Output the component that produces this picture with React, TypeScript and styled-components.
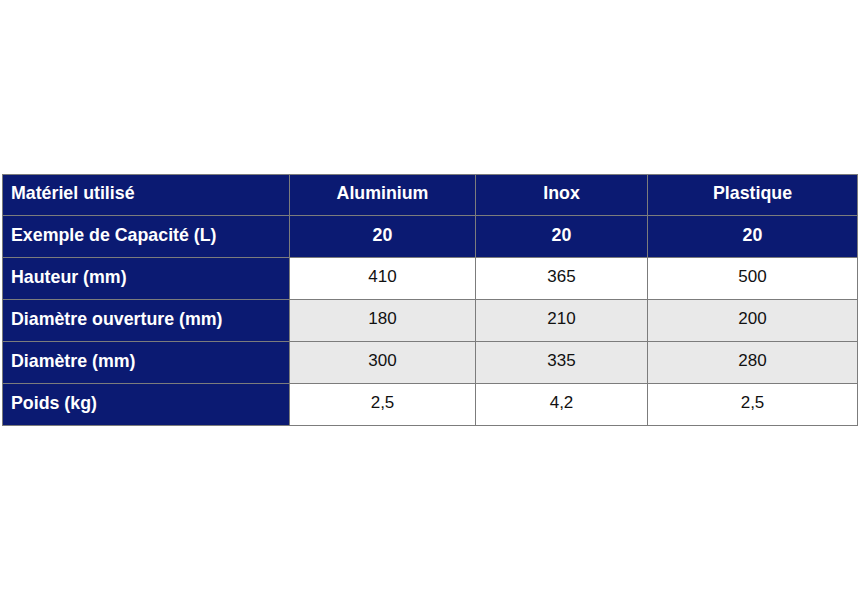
import styled, { createGlobalStyle } from "styled-components";

const GlobalStyle = createGlobalStyle`
  body {
    margin: 0;
    background: #ffffff;
    font-family: "Liberation Sans", Arial, sans-serif;
  }
`;

const Page = styled.div`
  width: 860px;
  height: 600px;
  padding: 174px 0 0 2px;
  box-sizing: border-box;
`;

const Table = styled.table`
  border-collapse: collapse;
  table-layout: fixed;
  width: 855px;
  color: #111111;
`;

const Row = styled.tr<{ $first?: boolean }>`
  height: ${(p) => (p.$first ? "41px" : "42px")};
`;

const Cell = styled.td<{ $dark?: boolean; $shade?: boolean; $left?: boolean }>`
  border: 1px solid #7c7c7c;
  padding: 0 8px 3px;
  box-sizing: border-box;
  text-align: ${(p) => (p.$left ? "left" : "center")};
  font-weight: ${(p) => (p.$dark ? 700 : 400)};
  font-size: ${(p) => (p.$dark ? "17.8px" : "17px")};
  color: ${(p) => (p.$dark ? "#ffffff" : "#111111")};
  background: ${(p) =>
    p.$dark ? "#0b1a72" : p.$shade ? "#e9e9e9" : "#ffffff"};
  white-space: nowrap;
`;

interface iRow {
  label: string;
  values: string[];
  header?: boolean;
  shade?: boolean;
}

const COLUMN_WIDTHS = [287, 186, 172, 210];

const ROWS: iRow[] = [
  { label: "Matériel utilisé", values: ["Aluminium", "Inox", "Plastique"], header: true },
  { label: "Exemple de Capacité (L)", values: ["20", "20", "20"], header: true },
  { label: "Hauteur (mm)", values: ["410", "365", "500"] },
  { label: "Diamètre ouverture (mm)", values: ["180", "210", "200"], shade: true },
  { label: "Diamètre (mm)", values: ["300", "335", "280"], shade: true },
  { label: "Poids (kg)", values: ["2,5", "4,2", "2,5"] },
];

const App: React.FC = () => {
  return (
    <Page>
      <GlobalStyle />
      <Table>
        <colgroup>
          {COLUMN_WIDTHS.map((w, i) => (
            <col key={i} style={{ width: w }} />
          ))}
        </colgroup>
        <tbody>
          {ROWS.map((row, idx) => (
            <Row key={row.label} $first={idx === 0}>
              <Cell $dark $left>
                {row.label}
              </Cell>
              {row.values.map((v, i) => (
                <Cell key={i} $dark={row.header} $shade={row.shade}>
                  {v}
                </Cell>
              ))}
            </Row>
          ))}
        </tbody>
      </Table>
    </Page>
  );
};

export default App;
